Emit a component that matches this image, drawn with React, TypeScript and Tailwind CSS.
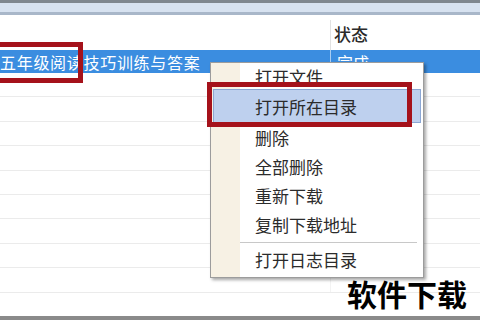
const cjk = "font-['Noto_Sans_CJK_SC',sans-serif]";

const items = [
  { label: "打开文件", h: "h-[26px]" },
  { label: "打开所在目录", h: "h-[34px]", active: true },
  { label: "删除", h: "h-[29px]" },
  { label: "全部删除", h: "h-[28px]" },
  { label: "重新下载", h: "h-[30px]" },
  { label: "复制下载地址", h: "h-[29px]" },
];

function ContextMenu() {
  return (
    <div className="absolute left-[210px] top-[62px] w-[214px] h-[216px] border border-[#9c9c9c] bg-[linear-gradient(90deg,#f7f1e4_29px,#ffffff_29px)] shadow-[2px_2px_3px_rgba(0,0,0,0.35)] flex flex-col pb-[3px]">
      {items.map((it) => (
        <div
          key={it.label}
          className={`${it.h} mx-[2px] pl-[41px] flex items-center border text-[17px] leading-none text-[#2b2b2b] ${
            it.active ? "bg-[#bed0ee] border-[#8ba7d4]" : "border-transparent"
          }`}
        >
          {it.label}
        </div>
      ))}
      <div className="h-[6px] flex items-center pl-[29px] pr-[6px]">
        <div className="h-px w-full bg-[#c8c8c8]" />
      </div>
      <div className="h-[29px] mx-[2px] pl-[41px] flex items-center border border-transparent text-[17px] leading-none text-[#2b2b2b]">
        打开日志目录
      </div>
    </div>
  );
}

export default function App() {
  const rows = Array.from({ length: 9 });

  return (
    <div className={`relative w-[480px] h-[320px] overflow-hidden bg-white flex flex-col ${cjk}`}>
      <div className="h-[3px] bg-[#7f878f]" />
      <div className="h-[9px] bg-[#d7e2f0]" />
      <div className="h-[3px] bg-[#a9b7c9]" />

      <div className="h-[35px] flex">
        <div className="w-[330px]" />
        <div className="mt-[5px] pt-[5px] border-l border-[#e2e2e2] pl-[3px] flex items-start text-[17px] leading-none text-[#2a2a2a] font-medium">
          状态
        </div>
      </div>

      <div className="h-[23px] flex bg-[#3b8de0] text-white">
        <div className="w-[330px] flex items-center text-[16px] tracking-[0.7px] leading-none">
          五年级阅读技巧训练与答案
        </div>
        <div className="border-l border-[#a8cdf2] pl-[6px] flex items-center text-[16px] leading-none">
          完成
        </div>
      </div>

      {rows.map((_, i) => (
        <div key={i} className="h-[24.4px] shrink-0 border-b border-[#ebebeb] flex">
          <div className="w-[330px]" />
          <div className="border-l border-[#f3f3f3]" />
        </div>
      ))}

      <div className="flex-1" />
      <div className="h-[4px] bg-[#8a8a8a]" />

      <div className="absolute left-[-6px] top-[42px] w-[89px] h-[41px] border-[5px] border-[#a5121b]" />

      <ContextMenu />

      <div className="absolute left-[207px] top-[82px] w-[205px] h-[45px] border-[5px] border-[#a5121b]" />

      <div className="absolute left-[347px] top-[278px] text-[30px] font-bold leading-none text-black">
        软件下载
      </div>
    </div>
  );
}
